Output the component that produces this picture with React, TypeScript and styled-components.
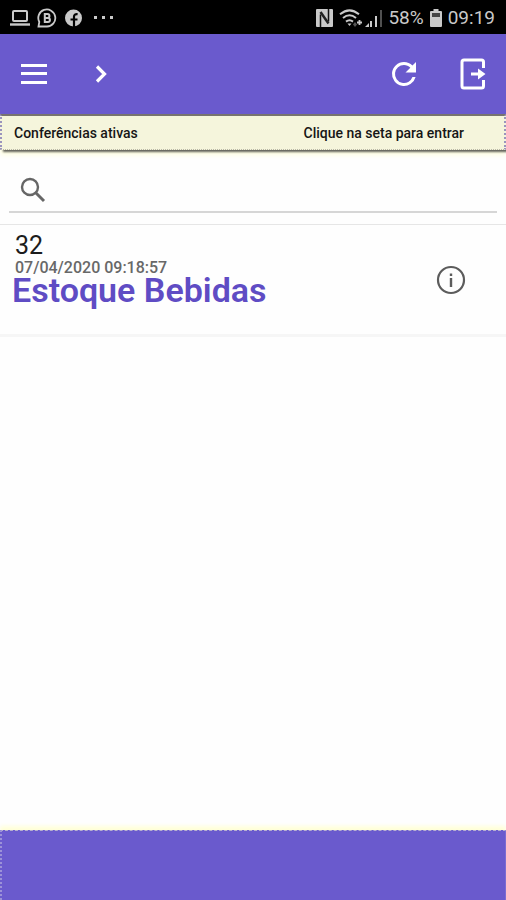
import React from "react";
import styled, { createGlobalStyle } from "styled-components";

const GlobalStyle = createGlobalStyle`
  *, *::before, *::after { box-sizing: border-box; }
  body { margin: 0; background: #fff; font-family: Roboto, "Liberation Sans", sans-serif; }
`;

const Screen = styled.div`
  display: flex;
  flex-direction: column;
  min-height: 100vh;
  background: #fefefe;
`;

const StatusBar = styled.div`
  display: flex;
  align-items: center;
  justify-content: space-between;
  height: 34px;
  padding: 2px 11px 0 9px;
  background: #000;
  color: #c9c9c9;
  font-size: 19px;
  line-height: 24px;
`;

const StatusGroup = styled.div<{ $gap: number }>`
  display: flex;
  align-items: center;
  gap: ${({ $gap }) => $gap}px;
  svg { display: block; }
`;

const AppBar = styled.header`
  display: flex;
  align-items: center;
  justify-content: space-between;
  height: 80px;
  padding: 0 13px 0 14px;
  background: #6a5acd;
`;

const BarGroup = styled.div<{ $gap: number }>`
  display: flex;
  gap: ${({ $gap }) => $gap}px;
`;

const IconButton = styled.button<{ $color: string }>`
  display: flex;
  align-items: center;
  justify-content: center;
  width: 40px;
  height: 40px;
  padding: 0;
  border: 0;
  background: none;
  color: ${({ $color }) => $color};
  cursor: pointer;
`;

const Notice = styled.div`
  display: flex;
  justify-content: space-between;
  align-items: center;
  height: 36px;
  padding: 0 40px 0 12px;
  border: 2px dotted #9a94bd;
  border-top: 2px solid #77736f;
  border-bottom: 1px dotted #b9b8a6;
  background: #f5f5dc;
  box-shadow: 3px 2px 2px #62625a, 0 5px 5px #ffffe0;
  color: #161616;
  font-size: 14px;
  font-weight: 500;
  line-height: 16px;
`;

const SearchField = styled.label`
  display: flex;
  align-items: center;
  gap: 12px;
  height: 46px;
  margin: 17px 9px 11px;
  padding: 2px 10px 0;
  border-bottom: 2px solid #d6d6d6;
  color: #666;
`;

const SearchInput = styled.input`
  flex: 1;
  min-width: 0;
  border: 0;
  outline: 0;
  background: none;
  color: #222;
  font: inherit;
  font-size: 18px;
`;

const List = styled.ul`
  flex: 1;
  margin: 0;
  padding: 0;
  list-style: none;
`;

const Item = styled.li`
  display: flex;
  align-items: center;
  justify-content: space-between;
  height: 113px;
  padding: 0 35px 0 12px;
  border-top: 1px solid #e6e6e6;
  border-bottom: 3px solid #f6f6f6;
`;

const ItemText = styled.div`
  align-self: flex-start;
  padding-top: 6px;
`;

const ItemNumber = styled.div`
  padding-left: 3px;
  color: #1c1c1c;
  font-size: 25px;
  line-height: 29px;
`;

const ItemDate = styled.time`
  display: block;
  padding-left: 3px;
  color: #686868;
  font-size: 16px;
  font-weight: 500;
  line-height: 16px;
`;

const ItemTitle = styled.h2`
  margin: 0;
  color: #5f4cc4;
  font-size: 34px;
  font-weight: 600;
  line-height: 29px;
`;

const Footer = styled.footer`
  height: 70px;
  border: 2px dotted #9c92d8;
  border-top: 1px dashed #b5afcf;
  border-right: 1px solid #7b6cd2;
  border-bottom: 0;
  background: #6a5acd;
  box-shadow: 0 -4px 4px #ffffd8;
`;

const Laptop = () => (
  <svg width="22" height="18" viewBox="0 0 22 18" fill="none" stroke="currentColor" strokeWidth="2" aria-hidden="true">
    <rect x="4" y="2" width="14" height="10" rx="1" />
    <path d="M1 15.5h20" strokeWidth="2.4" />
  </svg>
);

const ChatB = () => (
  <svg width="20" height="20" viewBox="0 0 20 20" fill="none" stroke="currentColor" strokeWidth="1.8" aria-hidden="true">
    <path d="M1.5 18.500l.8-4.500A8.500 8.500 0 1 1 10 18.500z" />
    <path d="M7.8 6h2.700a1.900 1.900 0 0 1 0 3.900H7.800zm0 3.900h3.100a2 2 0 0 1 0 4.100H7.800z" strokeWidth="2" />
  </svg>
);

const Facebook = () => (
  <svg width="17" height="18" viewBox="0 0 17 18" aria-hidden="true">
    <circle cx="8.5" cy="9" r="8.5" fill="currentColor" />
    <path d="M9 18v-8M5.5 10.5h7M9 11V7.700c0-2 1.200-2.700 3.600-2.500" fill="none" stroke="#000" strokeWidth="2.2" />
  </svg>
);

const Dots = () => (
  <svg width="19" height="4" viewBox="0 0 19 4" fill="currentColor" aria-hidden="true">
    <rect y="0" width="3" height="3" /><rect x="8" width="3" height="3" /><rect x="16" width="3" height="3" />
  </svg>
);

const Nfc = () => (
  <svg width="17" height="18" viewBox="0 0 17 18" aria-hidden="true">
    <rect width="17" height="18" rx="1" fill="currentColor" />
    <path d="M4.500 18V5.500M12.500 0v12.500" fill="none" stroke="#111" strokeWidth="1.500" />
    <path d="M4.500 3l8 11.500" stroke="#222" strokeWidth="2.500" />
  </svg>
);

const Wifi = () => (
  <svg width="24" height="19" viewBox="0 0 24 19" fill="none" stroke="currentColor" strokeWidth="2" aria-hidden="true">
    <path d="M1 5.3C7 .3 14 .3 20 5.3M4 9c4-3.3 9-3.3 13 0M7 12.600c2.400-1.800 4.600-1.800 7 0" />
    <path d="M8.500 14.500h4l-2 2.500z" fill="currentColor" stroke="none" />
    <path d="M14 15.500l2-2.500 2 2.500-2 2.500z" fill="#555" stroke="none" />
    <path d="M20.500 11v5M18 13.500h5" strokeWidth="1.800" />
  </svg>
);

const Signal = () => (
  <svg width="17" height="18" viewBox="0 0 17 18" fill="currentColor" aria-hidden="true">
    <path d="M0 18l4-4v4zM5 12h2v6H5zM10 7h2v11h-2z" />
    <path d="M15 1h2v17h-2z" opacity=".4" />
  </svg>
);

const Battery = () => (
  <svg width="12" height="18" viewBox="0 0 12 18" aria-hidden="true">
    <path d="M3.500 0h5v2H11a1 1 0 0 1 1 1v14a1 1 0 0 1-1 1H1a1 1 0 0 1-1-1V3a1 1 0 0 1 1-1h2.500z" fill="currentColor" />
    <path d="M2 4h8v4H2z" fill="#444" />
  </svg>
);

const Menu = () => (
  <svg width="28" height="22" viewBox="0 0 28 22" fill="#fff" aria-hidden="true">
    <rect x="1" y="1" width="26" height="3" /><rect x="1" y="9" width="26" height="3" /><rect x="1" y="18" width="26" height="3" />
  </svg>
);

const Chevron = () => (
  <svg width="14" height="20" viewBox="0 0 14 20" fill="none" stroke="#fff" strokeWidth="3.2" aria-hidden="true">
    <path d="M3 2.500l7.500 7.500L3 17.500" />
  </svg>
);

const Refresh = () => (
  <svg width="36" height="36" viewBox="0 0 24 24" fill="currentColor" aria-hidden="true">
    <path d="M17.650 6.350A7.958 7.958 0 0 0 12 4a8 8 0 1 0 7.730 10h-2.080A6 6 0 1 1 12 6c1.660 0 3.140.690 4.220 1.780L13 11h7V4l-2.350 2.350z" />
  </svg>
);

const Exit = () => (
  <svg width="26" height="32" viewBox="0 0 26 32" aria-hidden="true">
    <path d="M23.500 10V4a2 2 0 0 0-2-2H4a2 2 0 0 0-2 2v24a2 2 0 0 0 2 2h17.500a2 2 0 0 0 2-2v-6" fill="none" stroke="#fff" strokeWidth="3" />
    <path d="M11 14.500h7V10.500l7.500 5.500-7.500 5.500v-4h-7z" fill="#fff" />
  </svg>
);

const Magnifier = () => (
  <svg width="28" height="28" viewBox="0 0 28 28" fill="none" stroke="currentColor" aria-hidden="true">
    <circle cx="11" cy="11" r="8" strokeWidth="2.400" />
    <path d="M17 17l8 8" strokeWidth="3" />
  </svg>
);

const Info = () => (
  <svg width="30" height="30" viewBox="0 0 30 30" fill="none" stroke="currentColor" aria-hidden="true">
    <circle cx="15" cy="15" r="13" strokeWidth="2.200" />
    <path d="M15 13v9M15 8.500v2.500" strokeWidth="2.400" />
  </svg>
);

const conferences = [{ id: 32, date: "07/04/2020 09:18:57", title: "Estoque Bebidas" }];

export default function App() {
  return (
    <>
      <GlobalStyle />
      <Screen>
        <StatusBar>
          <StatusGroup $gap={6}>
            <Laptop />
            <StatusGroup $gap={8}>
              <ChatB />
              <StatusGroup $gap={12}>
                <Facebook />
                <Dots />
              </StatusGroup>
            </StatusGroup>
          </StatusGroup>
          <StatusGroup $gap={6}>
            <Nfc />
            <StatusGroup $gap={2}>
              <Wifi />
              <Signal />
            </StatusGroup>
            <span>58%</span>
            <Battery />
            <span>09:19</span>
          </StatusGroup>
        </StatusBar>
        <AppBar>
          <BarGroup $gap={27}>
            <IconButton $color="#fff" aria-label="Menu"><Menu /></IconButton>
            <IconButton $color="#fff" aria-label="Avançar"><Chevron /></IconButton>
          </BarGroup>
          <BarGroup $gap={29}>
            <IconButton $color="#fff" aria-label="Atualizar"><Refresh /></IconButton>
            <IconButton $color="#fff" aria-label="Sair"><Exit /></IconButton>
          </BarGroup>
        </AppBar>
        <Notice>
          <span>Conferências ativas</span>
          <span>Clique na seta para entrar</span>
        </Notice>
        <SearchField>
          <Magnifier />
          <SearchInput type="search" aria-label="Pesquisar" />
        </SearchField>
        <List>
          {conferences.map((c) => (
            <Item key={c.id}>
              <ItemText>
                <ItemNumber>{c.id}</ItemNumber>
                <ItemDate>{c.date}</ItemDate>
                <ItemTitle>{c.title}</ItemTitle>
              </ItemText>
              <IconButton $color="#5c5c5c" aria-label="Detalhes"><Info /></IconButton>
            </Item>
          ))}
        </List>
        <Footer />
      </Screen>
    </>
  );
}
